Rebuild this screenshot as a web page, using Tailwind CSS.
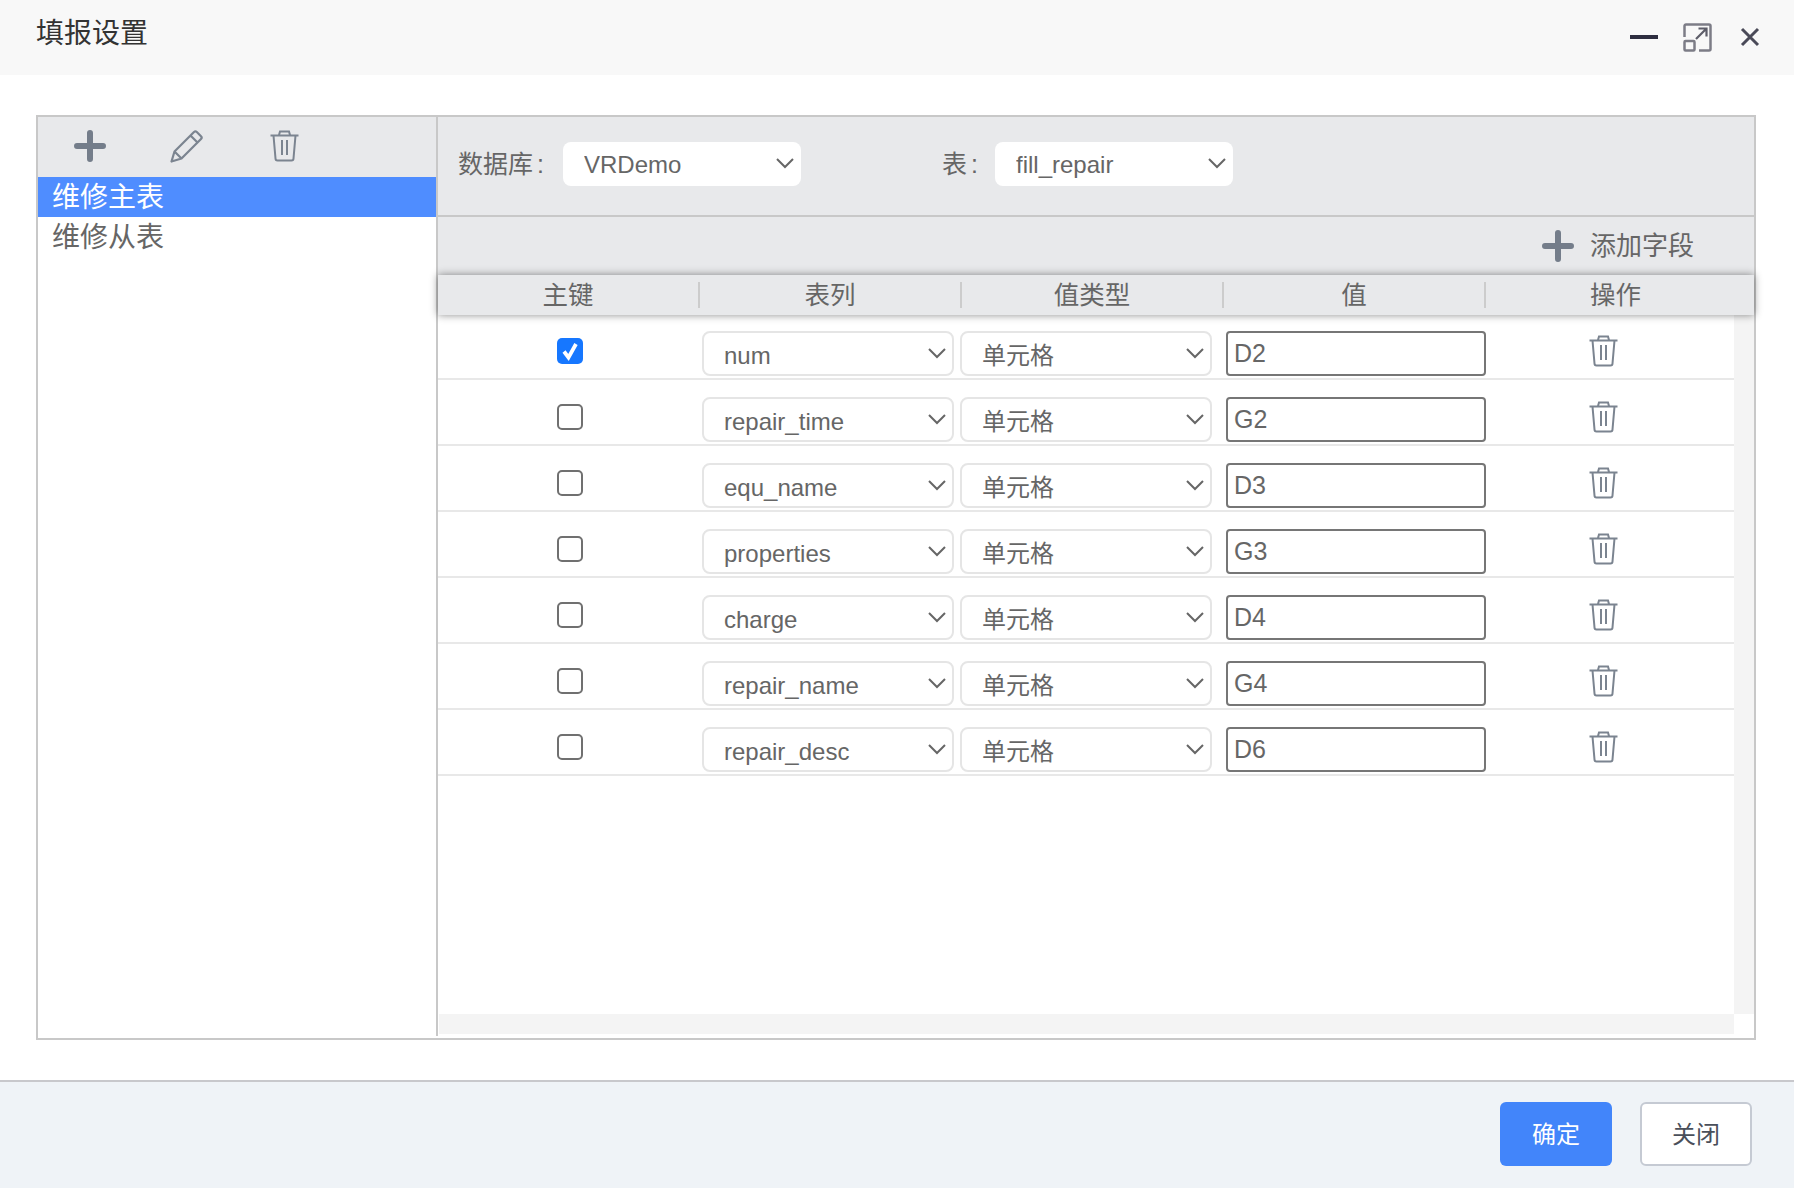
<!DOCTYPE html>
<html lang="zh-CN">
<head>
    <meta charset="UTF-8">
    <meta name="viewport" content="width=device-width, initial-scale=1.0">
    <title>填报设置</title>
    <script src="https://cdn.jsdelivr.net/npm/@tailwindcss/browser@4"></script>
</head>
<body class="h-screen overflow-hidden bg-white font-['Liberation_Sans','Noto_Sans_CJK_SC',sans-serif] text-[#666]">
    <!-- title bar -->
    <div class="flex h-[75px] items-start justify-between bg-[#f8f8f8]">
        <h1 class="ml-[36px] mt-[16px] text-[28px] leading-[36px] font-normal text-[#333]">填报设置</h1>
        <div class="relative mr-[34px] mt-[23px] flex items-start">
            <div class="mr-[25px] mt-[12px] h-[4px] w-[28px] bg-[#2e2e40]"></div>
            <svg class="mr-[28px]" width="29" height="29" viewBox="0 0 29 29" fill="none">
                <path d="M1.5 14V3a1.5 1.5 0 0 1 1.5-1.5h23a1.5 1.5 0 0 1 1.5 1.5v23a1.5 1.5 0 0 1-1.5 1.5H16" stroke="#7c7c86" stroke-width="2.5"/>
                <rect x="1.5" y="18" width="10" height="9.5" rx="1" stroke="#7c7c86" stroke-width="2.5"/>
                <path d="M13 16 23 6M15.5 5.5H23.5V13.5" stroke="#5d5d69" stroke-width="2.2"/>
            </svg>
            <svg class="mt-[4px]" width="20" height="20" viewBox="0 0 20 20" fill="none">
                <path d="M2 2 18 18M18 2 2 18" stroke="#4a4a58" stroke-width="3"/>
            </svg>
        </div>
    </div>

    <div class="px-[36px] pt-[40px] pb-[40px]">
        <div class="flex h-[925px] w-[1720px] border-2 border-[#c8c8c8]">
            <!-- table list -->
            <div class="h-[919px] w-[400px] shrink-0 border-r-2 border-[#c8c8c8]">
                <div class="flex h-[60px] items-start bg-[#e8e9eb]">
                    <svg class="ml-[36px] mt-[13px]" width="32" height="32" viewBox="0 0 32 32" fill="none">
                        <path d="M16 3V29M3 16H29" stroke="#747d8a" stroke-width="6" stroke-linecap="round"/>
                    </svg>
                    <svg class="ml-[64px] mt-[12px]" width="34" height="34" viewBox="0 0 34 34" fill="none">
                        <path d="M1.5 32.5 4.5 22.5 24 3a2 2 0 0 1 2.8 0L31 7.2a2 2 0 0 1 0 2.8L11.5 29.5ZM4.5 22.5 11.5 29.5M20.5 6.5 27.5 13.5" stroke="#7b8490" stroke-width="2.2" stroke-linejoin="round"/>
                    </svg>
                    <svg class="ml-[66px] mt-[13px]" width="29" height="32" viewBox="0 0 29 32" fill="none">
                        <path d="M.5 5.5H28.5M9 5 10 1.5H19L20 5M3.5 5.5 5.5 28.5A2 2 0 0 0 7.5 30.5H21.5A2 2 0 0 0 23.5 28.5L25.5 5.5M12 10V25M17 10V25" stroke="#7b8490" stroke-width="2"/>
                    </svg>
                </div>
                <div class="h-[40px] bg-[#4f8dff] pl-[14px] pt-[1px] text-[28px] leading-[40px] text-white">维修主表</div>
                <div class="h-[40px] pl-[14px] pt-[1px] text-[28px] leading-[40px] text-[#666]">维修从表</div>
            </div>

            <!-- fields -->
            <div class="flex min-w-0 flex-1 flex-col">
                <div class="flex h-[100px] shrink-0 items-start border-b-2 border-[#c8c8c8] bg-[#e8e9eb] pt-[25px]">
                    <label class="ml-[20px] w-[105px] text-[25px] leading-[44px]">数据库<span class="ml-[4px]">:</span></label>
                    <div class="relative w-[238px]">
                        <select id="dbSelect" class="h-[44px] w-full appearance-none rounded-[8px] bg-white pl-[21px] pt-[2px] text-[24px] text-[#666]"><option>VRDemo</option></select>
                        <svg class="absolute right-[7px] top-[16px]" width="18" height="11" viewBox="0 0 18 11" fill="none"><path d="M1 1 9 9 17 1" stroke="#666" stroke-width="2"/></svg>
                    </div>
                    <label class="ml-[141px] w-[53px] text-[25px] leading-[44px]">表<span class="ml-[4px]">:</span></label>
                    <div class="relative w-[238px]">
                        <select id="tableSelect" class="h-[44px] w-full appearance-none rounded-[8px] bg-white pl-[21px] pt-[2px] text-[24px] text-[#666]"><option>fill_repair</option></select>
                        <svg class="absolute right-[7px] top-[16px]" width="18" height="11" viewBox="0 0 18 11" fill="none"><path d="M1 1 9 9 17 1" stroke="#666" stroke-width="2"/></svg>
                    </div>
                </div>

                <div class="flex h-[58px] shrink-0 items-center justify-end bg-[#e8e9eb] pr-[60px]">
                    <svg class="mr-[16px]" width="32" height="32" viewBox="0 0 32 32" fill="none">
                        <path d="M16 3V29M3 16H29" stroke="#747d8a" stroke-width="6" stroke-linecap="round"/>
                    </svg>
                    <span class="text-[26px] leading-[36px]">添加字段</span>
                </div>

                <!-- table head -->
                <div class="relative z-10 flex h-[40px] shrink-0 items-center bg-[#e8e9eb] text-center text-[25.5px] shadow-[0_0_8px_rgba(0,0,0,0.45)]">
                    <div class="h-[26px] w-[262px] border-r-2 border-[#ccc] leading-[26px]">主键</div>
                    <div class="h-[26px] w-[262px] border-r-2 border-[#ccc] leading-[26px]">表列</div>
                    <div class="h-[26px] w-[262px] border-r-2 border-[#ccc] leading-[26px]">值类型</div>
                    <div class="h-[26px] w-[262px] border-r-2 border-[#ccc] leading-[26px]">值</div>
                    <div class="h-[26px] flex-1 pr-[9px] leading-[26px]">操作</div>
                </div>

                <!-- rows, with the empty scrollbars on the right and bottom -->
                <div class="flex h-[699px] shrink-0">
                    <div id="rows" class="-mt-[1px] w-[1296px] shrink-0"></div>
                    <div class="w-[20px] bg-[#f4f4f4]"></div>
                </div>
                <div class="ml-[1px] h-[20px] w-[1295px] bg-[#f4f4f4]"></div>
            </div>
        </div>
    </div>

    <!-- footer -->
    <div class="flex h-[108px] items-start justify-end border-t-2 border-[#c8c8cc] bg-[#eff3f7] pr-[42px] pt-[20px]">
        <button class="h-[64px] w-[112px] rounded-[6px] bg-[#4285fa] pt-[2px] text-[24px] text-white">确定</button>
        <button class="ml-[28px] h-[64px] w-[112px] rounded-[6px] border-2 border-[#c5cad3] bg-white pt-[2px] text-[24px] text-[#4a4f5a]">关闭</button>
    </div>

    <script>
        const fields = [
            { column: 'num', cell: 'D2', key: true },
            { column: 'repair_time', cell: 'G2' },
            { column: 'equ_name', cell: 'D3' },
            { column: 'properties', cell: 'G3' },
            { column: 'charge', cell: 'D4' },
            { column: 'repair_name', cell: 'G4' },
            { column: 'repair_desc', cell: 'D6' }
        ];

        const chevron = `<svg class="absolute right-[8px] top-[17px]" width="18" height="11" viewBox="0 0 18 11" fill="none"><path d="M1 1 9 9 17 1" stroke="#666" stroke-width="2"/></svg>`;
        const trash = `<svg class="ml-[103px] mt-[4px]" width="29" height="32" viewBox="0 0 29 32" fill="none"><path d="M.5 5.5H28.5M9 5 10 1.5H19L20 5M3.5 5.5 5.5 28.5A2 2 0 0 0 7.5 30.5H21.5A2 2 0 0 0 23.5 28.5L25.5 5.5M12 10V25M17 10V25" stroke="#7b8490" stroke-width="2"/></svg>`;
        const checked = `<span class="flex h-[26px] w-[26px] items-center justify-center rounded-[5px] bg-[#1677ff]"><svg width="18" height="20" viewBox="0 0 18 20" fill="none"><path d="M3 10.5 7.5 16.5 15 3" stroke="#fff" stroke-width="3.8"/></svg></span>`;
        const unchecked = `<span class="block h-[26px] w-[26px] rounded-[5px] border-2 border-[#707070] bg-white"></span>`;

        document.getElementById('rows').innerHTML = fields.map(field => `
            <div class="flex h-[66px] items-start border-b-2 border-[#e8e8e8] pt-[17px]">
                <div class="w-[264px] shrink-0 pl-[119px] pt-[7px]">${field.key ? checked : unchecked}</div>
                <div class="relative mr-[6px] w-[252px] shrink-0">
                    <select class="h-[45px] w-full appearance-none rounded-[8px] border-2 border-[#e5e5e5] bg-white pl-[20px] pt-[4px] text-[24px] text-[#666]"><option>${field.column}</option></select>
                    ${chevron}
                </div>
                <div class="relative mr-[14px] w-[252px] shrink-0">
                    <select class="h-[45px] w-full appearance-none rounded-[8px] border-2 border-[#e5e5e5] bg-white pl-[20px] pt-[4px] text-[24px] text-[#666]"><option>单元格</option></select>
                    ${chevron}
                </div>
                <input type="text" value="${field.cell}" class="h-[45px] w-[260px] shrink-0 rounded-[4px] border-2 border-[#767676] bg-white pl-[6px] text-[25px] text-[#666]">
                ${trash}
            </div>`).join('');
    </script>
</body>
</html>
